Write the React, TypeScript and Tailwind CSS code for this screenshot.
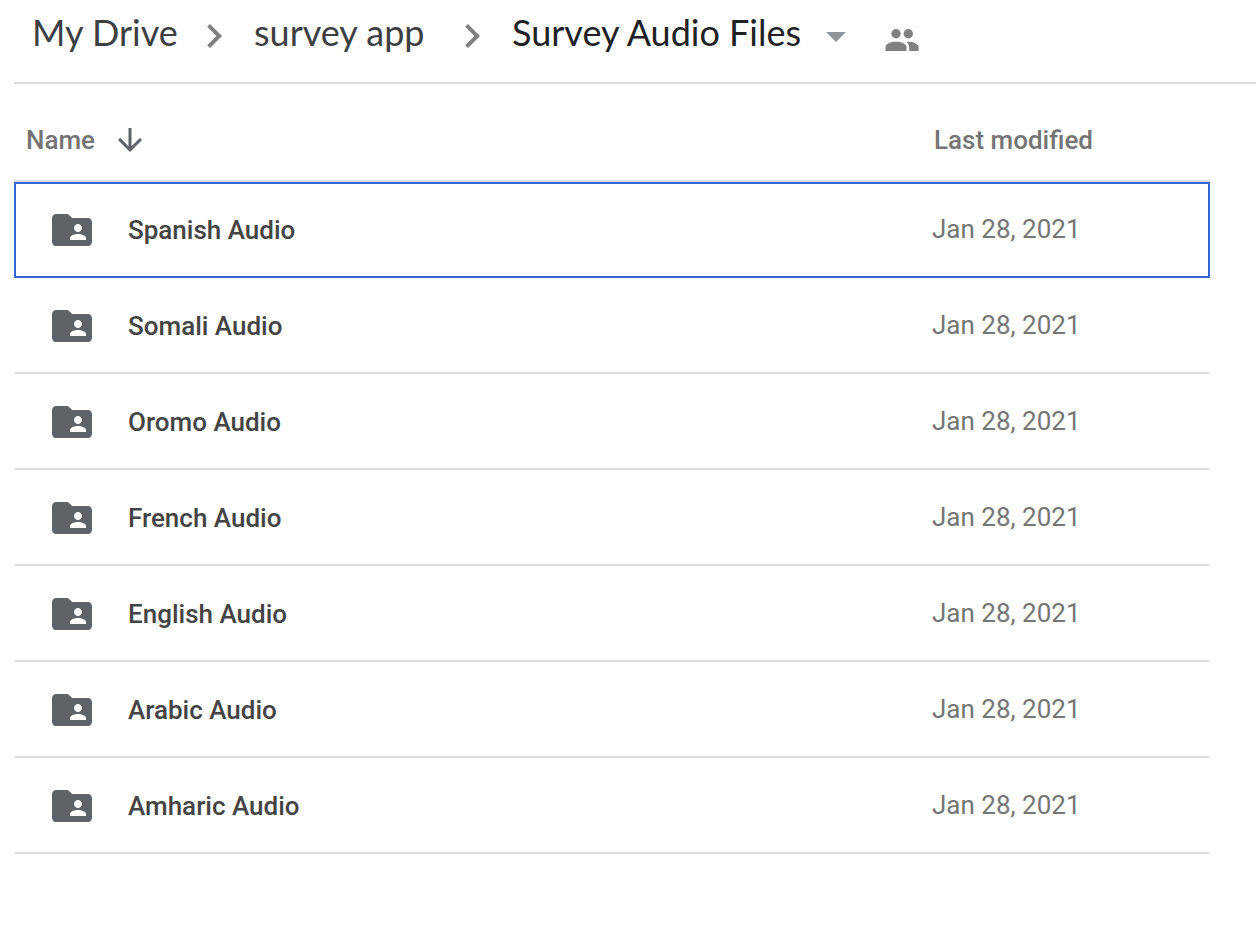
const folders = [
  "Spanish Audio",
  "Somali Audio",
  "Oromo Audio",
  "French Audio",
  "English Audio",
  "Arabic Audio",
  "Amharic Audio",
];

function ChevronIcon() {
  return (
    <svg viewBox="0 0 24 24" className="mt-[5px] size-12 shrink-0 fill-[#808080]" aria-hidden="true">
      <path d="M10 6 8.59 7.41 13.17 12l-4.58 4.59L10 18l6-6z" />
    </svg>
  );
}

function PeopleIcon() {
  return (
    <svg viewBox="0 0 34 22" className="h-[22px] w-[34px] fill-[#808080]" aria-hidden="true">
      <circle cx="11" cy="4.8" r="4.7" />
      <circle cx="23.3" cy="4.8" r="4.7" />
      <path d="M.5 22v-3.6c0-3.8 5.2-5.7 10.5-5.7s10.5 1.9 10.5 5.7V22z" />
      <path d="M21.3 12.8c6.2-.2 12.3 1.8 12.3 5.6V22h-9.4v-3.6c0-2.5-1.2-4.3-2.9-5.6z" />
    </svg>
  );
}

function FolderIcon() {
  return (
    <svg viewBox="0 0 24 24" className="size-12 shrink-0 fill-[#5f6368]" aria-hidden="true">
      <path d="M20 6h-8l-2-2H4c-1.1 0-1.99.9-1.99 2L2 18c0 1.1.9 2 2 2h16c1.1 0 2-.9 2-2V8c0-1.1-.9-2-2-2zm-5 3c1.1 0 2 .9 2 2s-.9 2-2 2-2-.9-2-2 .9-2 2-2zm4 8h-8v-1c0-1.33 2.67-2 4-2s4 .67 4 2v1z" />
    </svg>
  );
}

export default function App() {
  return (
    <main className="min-h-screen bg-white pl-3.5 font-['Roboto',sans-serif] text-[26px] leading-8">
      <header className="flex h-21 items-start border-b-2 border-[#dadce0] pt-[7px] pl-[18px] font-['Lato',sans-serif] text-[36px] leading-[50px] text-[#3c4043]">
        <nav aria-label="Breadcrumb" className="flex items-start whitespace-nowrap">
          <a href="#my-drive" className="min-w-[158px]">My Drive</a>
          <ChevronIcon />
          <a href="#survey-app" className="ml-4 min-w-[194px]">survey app</a>
          <ChevronIcon />
          <button type="button" className="ml-4 flex min-w-[334px] items-center justify-between text-[#202124]">
            Survey Audio Files
            <svg viewBox="0 0 20 10" className="mt-2.5 h-2.5 w-5 fill-[#919498]" aria-hidden="true">
              <path d="M0 0h20L10 10z" />
            </svg>
          </button>
        </nav>
        <button type="button" aria-label="Shared with people" className="mt-[22px] ml-[39px]">
          <PeopleIcon />
        </button>
      </header>

      <div className="pr-[46px]">
        <table className="w-full table-fixed border-separate border-spacing-0 text-left">
          <thead>
            <tr className="h-[98px] text-[#757575] *:border-b-2 *:border-[#dadce0] *:pt-4 *:font-medium">
              <th scope="col" className="pl-3">
                <button type="button" className="flex items-center gap-[17px]">
                  Name
                  <svg viewBox="0 0 24 24" className="size-9 fill-[#5f6368]" aria-hidden="true">
                    <path d="M20 12l-1.41-1.41L13 16.17V4h-2v12.17l-5.58-5.59L4 12l8 8 8-8z" />
                  </svg>
                </button>
              </th>
              <th scope="col" className="w-[278px] pl-0.5">
                Last modified
              </th>
            </tr>
          </thead>
          <tbody>
            {folders.map((name, i) => (
              <tr
                key={name}
                className={
                  i === 0
                    ? "h-24 outline-2 -outline-offset-2 outline-[#3367d6] *:border-b-2 *:border-transparent"
                    : "h-24 *:border-b-2 *:border-[#dadce0]"
                }
              >
                <td className="rounded-bl-[2px] pt-0.5 pl-[34px] font-medium text-[#444444]">
                  <a href="#folder" className="flex items-center gap-8">
                    <FolderIcon />
                    {name}
                  </a>
                </td>
                <td className="rounded-br-[2px] text-[#757575]">Jan 28, 2021</td>
              </tr>
            ))}
          </tbody>
        </table>
      </div>
    </main>
  );
}
